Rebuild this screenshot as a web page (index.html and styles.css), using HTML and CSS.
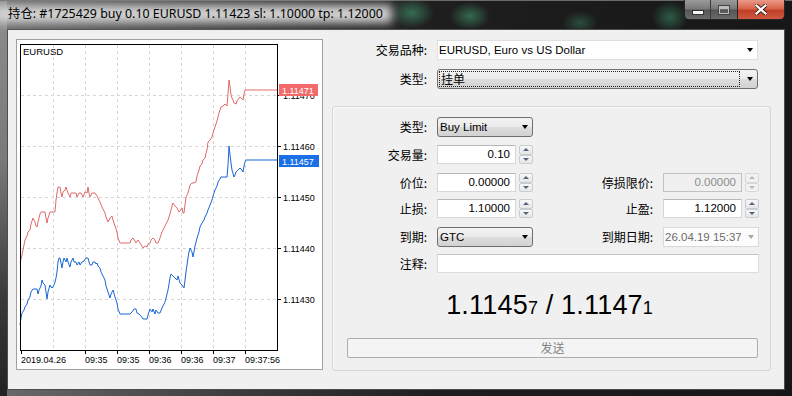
FILE: index.html
```html
<!DOCTYPE html>
<html>
<head>
<meta charset="utf-8">
<title>持仓</title>
<link rel="stylesheet" href="styles.css">
</head>
<body>
<div class="window">
  <div class="titlebar">
    <div class="title">持仓: #1725429 buy 0.10 EURUSD 1.11423 sl: 1.10000 tp: 1.12000</div>
    <div class="caption-buttons">
      <div class="cap-btn cap-min"><span class="min-glyph"></span></div>
      <div class="cap-btn cap-max"><span class="max-glyph"></span></div>
      <div class="cap-btn cap-close">
        <svg width="12" height="11" viewBox="0 0 12 11"><path d="M1.5 1.5 L10.5 9.5 M10.5 1.5 L1.5 9.5" stroke="#3a1a14" stroke-width="4" stroke-linecap="square"/><path d="M1.5 1.5 L10.5 9.5 M10.5 1.5 L1.5 9.5" stroke="#fff" stroke-width="2.2" stroke-linecap="square"/></svg>
      </div>
    </div>
  </div>
  <div class="client">
    <div class="chart">
      <svg class="chart-svg" width="305" height="329" viewBox="17 40 305 329">
        <g class="grid" stroke="#d6d6d6" stroke-dasharray="3 3" stroke-width="1">
          <line x1="53.5" y1="45" x2="53.5" y2="350"/>
          <line x1="85.5" y1="45" x2="85.5" y2="350"/>
          <line x1="117.5" y1="45" x2="117.5" y2="350"/>
          <line x1="149.5" y1="45" x2="149.5" y2="350"/>
          <line x1="181.5" y1="45" x2="181.5" y2="350"/>
          <line x1="213.5" y1="45" x2="213.5" y2="350"/>
          <line x1="245.5" y1="45" x2="245.5" y2="350"/>
          <line x1="21" y1="95.5" x2="277" y2="95.5"/>
          <line x1="21" y1="146.5" x2="277" y2="146.5"/>
          <line x1="21" y1="197.5" x2="277" y2="197.5"/>
          <line x1="21" y1="248.5" x2="277" y2="248.5"/>
          <line x1="21" y1="299.5" x2="277" y2="299.5"/>
        </g>
        <g stroke="#000" stroke-width="1">
          <line x1="277" y1="95.5" x2="281" y2="95.5"/>
          <line x1="277" y1="146.5" x2="281" y2="146.5"/>
          <line x1="277" y1="197.5" x2="281" y2="197.5"/>
          <line x1="277" y1="248.5" x2="281" y2="248.5"/>
          <line x1="277" y1="299.5" x2="281" y2="299.5"/>
          <line x1="21.5" y1="350" x2="21.5" y2="354"/>
          <line x1="85.5" y1="350" x2="85.5" y2="354"/>
          <line x1="117.5" y1="350" x2="117.5" y2="354"/>
          <line x1="149.5" y1="350" x2="149.5" y2="354"/>
          <line x1="181.5" y1="350" x2="181.5" y2="354"/>
          <line x1="213.5" y1="350" x2="213.5" y2="354"/>
          <line x1="245.5" y1="350" x2="245.5" y2="354"/>
        </g>
        <polyline class="ask" fill="none" stroke="#e06a6a" stroke-width="1" points="20,263 22,255 24,245 25,240 27,236 28,232 30,230 31,224 33,218 35,222 36,226 37,227 38,222 40,214 41,212 45,212 46,218 47,223 48,218 50,212 55,212 56,200 57,193 58,187 60,187 61,193 62,197 63,192 65,190 66,187 67,190 68,193 70,197 71,193 76,193 77,197 79,193 81,193 83,197 85,192 87,193 88,187 89,193 90,197 92,193 95,193 97,196 99,200 100,202 102,207 104,211 105,213 106,217 108,222 110,218 112,216 113,220 115,226 117,232 118,238 120,243 130,243 131,240 133,238 135,241 136,243 138,240 140,243 142,246 143,248 145,246 147,247 148,244 150,243 151,240 153,238 155,240 156,243 158,243 160,238 162,232 164,228 166,224 168,220 170,214 172,206 173,203 175,206 177,208 179,212 180,211 182,208 183,213 184,213 185,205 186,197 188,193 190,185 192,183 194,183 196,182 197,176 199,170 200,166 202,164 203,160 205,158 206,153 207,150 208,142 210,140 212,137 213,133 215,127 217,121 218,117 219,113 221,107 223,106 225,104 227,106 228,94 229,80 230,86 231,95 232,98 233,100 234,103 236,104 237,101 239,98 240,97 242,99 243,100 244,94 245,90 277,90"/>
        <polyline class="bid" fill="none" stroke="#1a66d6" stroke-width="1" points="20,325 21,318 22,313 24,310 25,307 27,304 28,300 30,297 31,292 33,289 37,289 38,294 39,290 41,286 42,280 43,283 45,285 46,292 47,299 48,292 50,285 51,287 52,288 54,285 55,282 56,278 57,272 58,262 59,258 60,258 61,263 62,268 63,262 64,258 66,262 67,258 68,262 70,267 71,262 73,258 74,262 76,262 77,265 79,262 80,265 82,262 84,261 86,258 88,258 89,262 90,265 92,265 93,262 95,262 96,264 97,263 98,266 100,268 101,272 103,276 105,280 106,286 108,292 110,298 111,294 113,290 115,297 117,303 118,309 120,314 130,314 132,312 134,309 136,309 137,313 139,314 141,316 143,319 147,319 148,315 150,309 152,312 153,309 155,314 156,310 158,313 160,313 162,308 164,304 165,302 166,298 168,290 169,284 170,278 171,274 173,276 175,278 177,280 178,276 180,283 182,285 184,288 185,280 186,272 187,265 188,258 189,252 190,248 192,252 193,257 195,246 197,238 199,232 200,227 202,223 204,220 205,217 207,213 208,210 210,205 212,200 213,196 215,190 217,186 218,182 220,179 221,177 227,177 228,165 229,146 230,155 231,163 232,170 234,177 235,175 236,172 238,170 240,168 242,170 243,172 244,166 245,162 246,160 277,160"/>
        <rect x="20.5" y="44.5" width="257" height="306" fill="none" stroke="#000" stroke-width="1"/>
        <g class="axis-text">
          <text x="23" y="55">EURUSD</text>
          <text x="283" y="99">1.11470</text>
          <text x="283" y="150">1.11460</text>
          <text x="283" y="201">1.11450</text>
          <text x="283" y="252">1.11440</text>
          <text x="283" y="303">1.11430</text>
          <text x="21" y="363">2019.04.26</text>
          <text x="85" y="363">09:35</text>
          <text x="117" y="363">09:35</text>
          <text x="149" y="363">09:36</text>
          <text x="181" y="363">09:36</text>
          <text x="213" y="363">09:37</text>
          <text x="245" y="363">09:37:56</text>
        </g>
        <rect x="279" y="84" width="39" height="12" fill="#f26a6a"/>
        <text class="tag-text" x="282" y="94">1.11471</text>
        <rect x="279" y="155" width="40" height="12" fill="#1a6fe6"/>
        <text class="tag-text" x="282" y="165">1.11457</text>
      </svg>
    </div>

    <div class="panel">
      <div class="top-form">
        <div class="lbl">交易品种:</div>
        <div class="combo combo-edit"><span class="combo-text">EURUSD, Euro vs US Dollar</span><span class="arrow"></span></div>
        <div class="lbl">类型:</div>
        <div class="combo combo-list"><span class="focus-rect">挂单</span><span class="arrow"></span></div>
      </div>

      <div class="group">
        <div class="form-grid">
          <div class="lbl r1">类型:</div>
          <div class="combo combo-list r1"><span class="combo-text">Buy Limit</span><span class="arrow"></span></div>
          <div class="r1 empty"></div>
          <div class="r1 empty"></div>

          <div class="lbl r2">交易量:</div>
          <div class="spinfield r2"><div class="field">0.10</div><div class="spin"><span class="spin-btn up"></span><span class="spin-btn down"></span></div></div>
          <div class="r2 empty"></div>
          <div class="r2 empty"></div>

          <div class="lbl r3">价位:</div>
          <div class="spinfield r3"><div class="field">0.00000</div><div class="spin"><span class="spin-btn up"></span><span class="spin-btn down"></span></div></div>
          <div class="lbl r3">停损限价:</div>
          <div class="spinfield r3 disabled"><div class="field">0.00000</div><div class="spin"><span class="spin-btn up"></span><span class="spin-btn down"></span></div></div>

          <div class="lbl r4">止损:</div>
          <div class="spinfield r4"><div class="field">1.10000</div><div class="spin"><span class="spin-btn up"></span><span class="spin-btn down"></span></div></div>
          <div class="lbl r4">止盈:</div>
          <div class="spinfield r4"><div class="field">1.12000</div><div class="spin"><span class="spin-btn up"></span><span class="spin-btn down"></span></div></div>

          <div class="lbl r5">到期:</div>
          <div class="combo combo-list r5"><span class="combo-text">GTC</span><span class="arrow"></span></div>
          <div class="lbl r5">到期日期:</div>
          <div class="combo combo-date r5"><span class="combo-text">26.04.19 15:37</span><span class="arrow"></span></div>

          <div class="lbl r6">注释:</div>
          <div class="comment r6"></div>
        </div>

        <div class="prices"><span class="big">1.1145</span><span class="small">7</span><span class="big"> / 1.1147</span><span class="small">1</span></div>

        <div class="send">发送</div>
      </div>
    </div>
  </div>
</div>
</body>
</html>
```
FILE: styles.css
```css
* { box-sizing: border-box; }

html, body {
  margin: 0;
  padding: 0;
}

body {
  width: 792px;
  height: 396px;
  overflow: hidden;
  background: #1c1c1c;
  font-family: "Liberation Sans", "Noto Sans CJK SC", sans-serif;
  color: #000;
}

.window {
  width: 792px;
  height: 396px;
  display: flex;
  flex-direction: column;
  background:
    radial-gradient(ellipse 22px 15px at 412px 12px, rgba(70, 170, 120, 0.55), rgba(70, 170, 120, 0)),
    radial-gradient(ellipse 20px 14px at 470px 15px, rgba(70, 170, 120, 0.55), rgba(70, 170, 120, 0)),
    radial-gradient(ellipse 18px 12px at 580px 22px, rgba(70, 170, 120, 0.35), rgba(70, 170, 120, 0)),
    radial-gradient(ellipse 18px 16px at 670px 16px, rgba(70, 170, 120, 0.45), rgba(70, 170, 120, 0)),
    linear-gradient(180deg, #8c8c8c 0, #7a7a7a 40%, #3a3a3a 75%, #222 100%) left top / 7px 100% no-repeat,
    linear-gradient(90deg, #6a6a6a 0, #3c3c3c 30%, #1e1e1e 55%, #171717 100%);
  border-top: 1px solid #6a6a6a;
}

/* ---------- title bar ---------- */
.titlebar {
  height: 28px;
  display: flex;
  align-items: flex-start;
}

.title {
  position: relative;
  isolation: isolate;
  margin-top: 4px;
  padding: 0 9px 0 8px;
  height: 18px;
  line-height: 18px;
  font-family: "Noto Sans", "Noto Sans CJK SC", sans-serif;
  font-size: 12.4px;
  white-space: nowrap;
  color: #000;
}

.title::before {
  content: "";
  position: absolute;
  left: -6px;
  right: 0;
  top: 0;
  bottom: 0;
  background: #d2d2d2;
  filter: blur(5px);
  z-index: -1;
}

.caption-buttons {
  margin-left: auto;
  margin-right: 7px;
  margin-top: -1px;
  display: flex;
  height: 20px;
}

.cap-btn {
  height: 20px;
  display: flex;
  align-items: center;
  justify-content: center;
  border: 1px solid #262626;
  border-top: none;
}

.cap-min,
.cap-max {
  width: 27px;
  background: linear-gradient(180deg, #9a9a9a 0, #7a7a7a 45%, #565656 55%, #6a6a6a 100%);
}

.cap-min {
  border-radius: 0 0 0 5px;
  border-right: 1px solid #3a3a3a;
}

.cap-max {
  border-left: none;
}

.cap-close {
  width: 47px;
  border-left: none;
  border-radius: 0 0 5px 0;
  background: linear-gradient(180deg, #e99a88 0, #d9634b 45%, #c0402a 55%, #d0583f 100%);
}

.min-glyph {
  width: 10px;
  height: 3px;
  margin-top: 6px;
  background: #f4f4f4;
  box-shadow: 0 0 0 1px #333;
}

.max-glyph {
  width: 10px;
  height: 8px;
  border: 1px solid #bdbdbd;
  border-top-width: 3px;
  box-shadow: 0 0 0 1px #444;
}

/* ---------- client ---------- */
.client {
  margin: 0 7px 6px 7px;
  flex: 1;
  background: #f0f0f0;
  border: 1px solid #4d4d4d;
  display: flex;
  gap: 9px;
  padding: 9px 0 0 8px;
}

.chart {
  width: 307px;
  height: 331px;
  border: 1px solid #a0a0a0;
  background: #fff;
}

.chart-svg {
  display: block;
}

.axis-text text {
  font-family: "Liberation Sans", sans-serif;
  font-size: 9px;
  fill: #000;
}

.axis-text text:first-child {
  font-size: 9.5px;
}

.tag-text {
  font-family: "Liberation Sans", sans-serif;
  font-size: 9px;
  fill: #fff;
}

/* ---------- panel ---------- */
.panel {
  width: 439px;
  display: flex;
  flex-direction: column;
}

.lbl {
  font-family: "Noto Sans CJK SC", sans-serif;
  font-size: 12px;
  text-align: right;
  white-space: nowrap;
  line-height: 20px;
}

.top-form {
  margin-top: 1px;
  display: grid;
  grid-template-columns: 95px 321px;
  grid-template-rows: 20px 20px;
  column-gap: 10px;
  row-gap: 9px;
}

.combo {
  height: 20px;
  display: flex;
  align-items: center;
  font-family: "Liberation Sans", "Noto Sans CJK SC", sans-serif;
  font-size: 11.5px;
  white-space: nowrap;
}

.combo-text {
  flex: 1;
  overflow: hidden;
}

.arrow {
  width: 0;
  height: 0;
  margin-left: 7px;
  margin-right: 4px;
  border-left: 3.5px solid transparent;
  border-right: 3.5px solid transparent;
  border-top: 4px solid #000;
}

.combo-edit {
  background: #fff;
  border: 1px solid #e0e0e0;
  padding-left: 1px;
}

.combo-list {
  border: 1px solid #707070;
  border-radius: 3px;
  padding-left: 2px;
  background: linear-gradient(180deg, #f3f3f3 0, #ebebeb 48%, #dddddd 52%, #d2d2d2 100%);
}

.focus-rect {
  flex: 1;
  height: 16px;
  line-height: 14px;
  margin-left: -1px;
  border: 1px dotted #222;
  padding-left: 1px;
  font-family: "Noto Sans CJK SC", sans-serif;
  font-size: 12px;
}

.combo-date {
  background: #fcfcfc;
  border: 1px solid #d9d9d9;
  padding-left: 1px;
  color: #6d6d6d;
}

.combo-date .arrow {
  border-top-color: #a8a8a8;
}

/* ---------- group box ---------- */
.group {
  margin-top: 17px;
  height: 265px;
  border: 1px solid #d5d5d5;
  border-radius: 3px;
  box-shadow: inset 1px 1px 0 #fafafa;
  padding-top: 10px;
  display: flex;
  flex-direction: column;
}

.form-grid {
  display: grid;
  grid-template-columns: 94px 96px 110px 96px;
  grid-template-rows: 20px 20px 18px 20px 19px 19px;
  column-gap: 10px;
  row-gap: 8px;
}

.form-grid .lbl.r2,
.form-grid .lbl.r3,
.form-grid .lbl.r4 {
  line-height: 19px;
}

.form-grid .lbl.r6 {
  line-height: 19px;
}

.spinfield {
  height: 19px;
  display: flex;
  gap: 3px;
}

.field {
  width: 79px;
  height: 19px;
  background: #fff;
  border: 1px solid #d6d6d6;
  border-top-color: #b8b8b8;
  text-align: right;
  padding-right: 5px;
  font-family: "Liberation Sans", sans-serif;
  font-size: 11.5px;
  line-height: 17px;
}

.spin {
  width: 14px;
  height: 19px;
  display: flex;
  flex-direction: column;
}

.spin-btn {
  flex: 1;
  display: flex;
  align-items: center;
  justify-content: center;
  border: 1px solid #c8ccd4;
  border-radius: 2px;
  background: linear-gradient(180deg, #f8f8f8, #e6e6e6);
}

.spin-btn.up::after {
  content: "";
  border-left: 3px solid transparent;
  border-right: 3px solid transparent;
  border-bottom: 3px solid #56637f;
}

.spin-btn.down::after {
  content: "";
  border-left: 3px solid transparent;
  border-right: 3px solid transparent;
  border-top: 3px solid #56637f;
}

.disabled .field {
  background: #f0f0f0;
  border-color: #c2c2c2;
  color: #8d8d8d;
}

.disabled .spin-btn {
  border-color: #d8d8d8;
  background: #f2f2f2;
}

.disabled .spin-btn.up::after {
  border-bottom-color: #b8b8b8;
}

.disabled .spin-btn.down::after {
  border-top-color: #b8b8b8;
}

.comment {
  grid-column: 2 / 5;
  height: 19px;
  background: #fff;
  border: 1px solid #dcdcdc;
  border-top-color: #c4c4c4;
}

/* ---------- prices ---------- */
.prices {
  margin-top: 17px;
  height: 30px;
  line-height: 30px;
  text-align: center;
  padding-right: 4px;
  white-space: pre;
  font-family: "Liberation Sans", sans-serif;
}

.big {
  font-size: 27px;
  letter-spacing: 0.2px;
}

.small {
  font-size: 18px;
}

/* ---------- send ---------- */
.send {
  margin: 18px 0 0 14px;
  width: 411px;
  height: 20px;
  border: 1px solid #adadad;
  border-radius: 2px;
  background: #f4f4f4;
  color: #838383;
  text-align: center;
  font-family: "Noto Sans CJK SC", sans-serif;
  font-size: 12px;
  line-height: 18px;
}
```
